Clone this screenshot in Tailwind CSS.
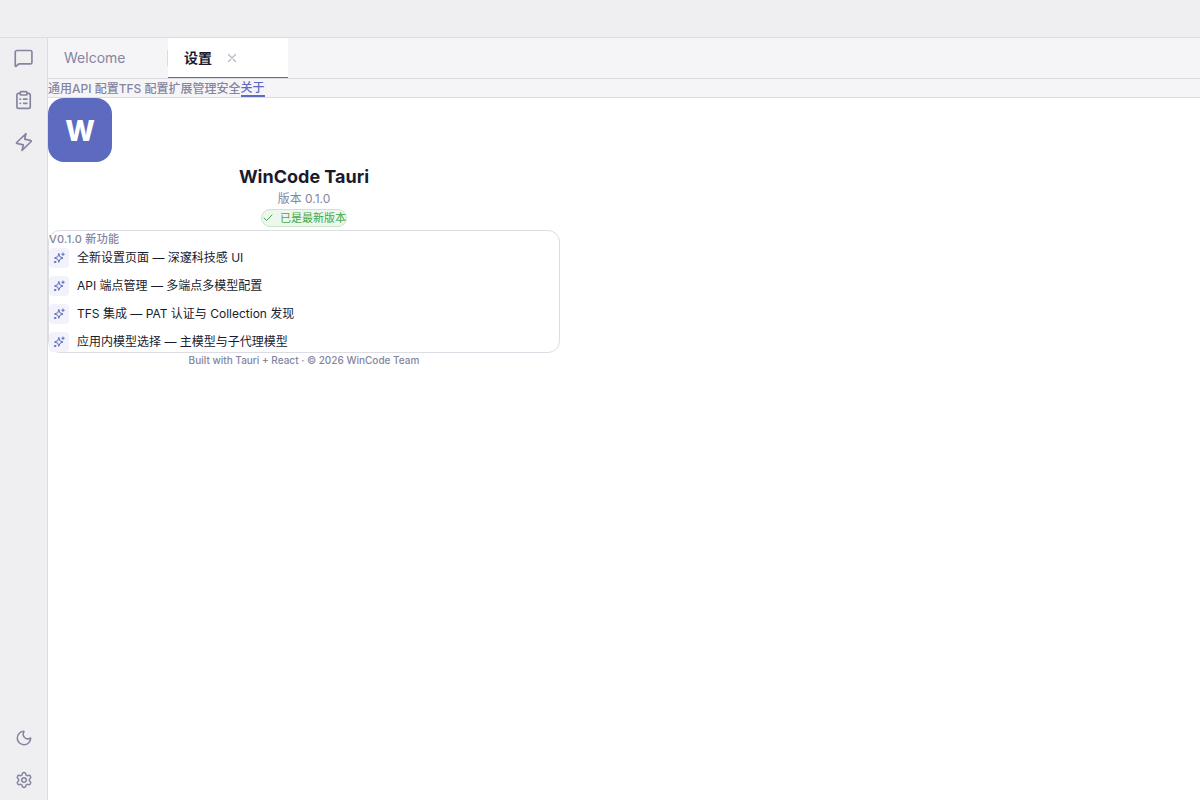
<!DOCTYPE html>
<html lang="zh-CN">
<head>
  <meta charset="UTF-8">
  <meta name="viewport" content="width=device-width, initial-scale=1.0">
  <title>WinCode Tauri</title>
  <script src="https://cdn.jsdelivr.net/npm/@tailwindcss/browser@4"></script>
</head>
<body class="h-screen flex flex-col overflow-hidden bg-white text-[#1a1a2e] font-['Inter','Noto_Sans_CJK_SC',sans-serif] antialiased">

  <header class="h-[38px] shrink-0 bg-[#efeff2] border-b border-[#dcdce4]"></header>

  <div class="flex flex-1 min-h-0">
    <!-- Activity bar -->
    <aside class="w-12 shrink-0 flex flex-col items-center justify-between bg-[#efeff2] border-r border-[#dcdce4] text-[#8585a0]">
      <div class="flex flex-col gap-0.5">
        <button class="size-10 flex items-center justify-center" aria-label="聊天">
          <svg class="size-5" viewBox="0 0 24 24" fill="none" stroke="currentColor" stroke-width="2" stroke-linecap="round" stroke-linejoin="round"><path d="M21.5 17a2 2 0 0 1-2 2H6.4a2 2 0 0 0-1.4.586l-2.2 2.202A.71.71 0 0 1 1.5 21.286V5a2 2 0 0 1 2-2h16a2 2 0 0 1 2 2z"/></svg>
        </button>
        <button class="size-10 flex items-center justify-center" aria-label="任务">
          <svg class="size-5" viewBox="0 0 24 24" fill="none" stroke="currentColor" stroke-width="2" stroke-linecap="round" stroke-linejoin="round"><rect x="7.5" y="2" width="8" height="4" rx="1"/><path d="M15.5 4h2a2 2 0 0 1 2 2v14a2 2 0 0 1-2 2h-12a2 2 0 0 1-2-2V6a2 2 0 0 1 2-2h2M11.5 11h4M11.5 16h4M7.3 11h.4M7.3 16h.4"/></svg>
        </button>
        <button class="size-10 flex items-center justify-center" aria-label="技能">
          <svg class="size-5" viewBox="0 0 24 24" fill="none" stroke="currentColor" stroke-width="2" stroke-linecap="round" stroke-linejoin="round"><path d="M14.4 2 12.8 8.6l7.6 1.8q.8.3.2 1L9.6 22l1.600-6.600L3.400 13.600q-.8-.3-.2-1z"/></svg>
        </button>
      </div>
      <div class="flex flex-col gap-0.5">
        <button class="size-10 flex items-center justify-center" aria-label="深色模式">
          <svg class="size-[18px]" viewBox="0 0 24 24" fill="none" stroke="currentColor" stroke-width="2" stroke-linecap="round" stroke-linejoin="round"><path d="M20.985 12.486a9 9 0 1 1-9.473-9.472c.405-.022.617.46.402.803a6 6 0 0 0 8.268 8.268c.344-.215.825-.004.803.401"/></svg>
        </button>
        <button class="size-10 flex items-center justify-center" aria-label="设置">
          <svg class="size-[18px]" viewBox="0 0 24 24" fill="none" stroke="currentColor" stroke-width="2" stroke-linecap="round" stroke-linejoin="round"><path d="M9.671 4.136a2.34 2.34 0 0 1 4.659 0 2.34 2.34 0 0 0 3.319 1.915 2.34 2.34 0 0 1 2.33 4.033 2.34 2.34 0 0 0 0 3.831 2.34 2.34 0 0 1-2.33 4.033 2.34 2.34 0 0 0-3.319 1.915 2.34 2.34 0 0 1-4.659 0 2.34 2.34 0 0 0-3.32-1.915 2.34 2.34 0 0 1-2.33-4.033 2.34 2.34 0 0 0 0-3.831A2.34 2.34 0 0 1 6.35 6.051a2.34 2.34 0 0 0 3.319-1.915"/><circle cx="12" cy="12" r="3"/></svg>
        </button>
      </div>
    </aside>

    <div class="flex-1 min-w-0 flex flex-col">
      <!-- Open tabs -->
      <div class="flex h-[41px] shrink-0 bg-[#f5f5f8] border-b border-[#dcdce4] text-sm">
        <div class="w-[120px] flex items-center pl-4 text-[#8585a0]">
          <button class="flex-1 text-left">Welcome</button>
          <span class="w-px h-4 bg-[#dcdce4]"></span>
        </div>
        <div class="w-[120px] h-10 flex items-center gap-3 px-4 bg-white border-b border-[#5c6bc0] font-semibold">
          <button>设置</button>
          <button class="size-4 flex items-center justify-center text-[#b4b4c4]" aria-label="关闭">
            <svg class="size-3.5" viewBox="0 0 24 24" fill="none" stroke="currentColor" stroke-width="2" stroke-linecap="round" stroke-linejoin="round"><path d="M18 6 6 18M6 6l12 12"/></svg>
          </button>
        </div>
      </div>

      <!-- Settings sections -->
      <nav class="flex h-[19px] shrink-0 bg-[#f5f5f8] border-b border-[#dcdce4] text-xs leading-5 font-medium text-[#8585a0]">
        <button>通用</button>
        <button>API 配置</button>
        <button>TFS 配置</button>
        <button>扩展管理</button>
        <button>安全</button>
        <button class="h-[18px] leading-[18px] border-b-2 border-[#5c6bc0] text-[#5c6bc0]">关于</button>
      </nav>

      <main class="flex-1 min-h-0 overflow-auto">
        <div class="max-w-lg">
          <div class="size-16 pt-0.5 flex items-center justify-center rounded-2xl bg-[#5c6bc0] text-white text-[28px] font-extrabold">W</div>
          <div class="flex flex-col items-center">
            <h1 class="text-lg leading-[30px] font-bold">WinCode Tauri</h1>
            <p class="mb-1 text-xs leading-[13px] text-[#8585a0]">版本 0.1.0</p>
            <div class="h-[18px] flex items-center gap-1.5 rounded-full border border-[#c8e6c9] bg-[#edf7ed] text-[11px] leading-4 text-[#43a847]">
              <svg class="size-3" viewBox="0 0 24 24" fill="none" stroke="currentColor" stroke-width="2" stroke-linecap="round" stroke-linejoin="round"><path d="M20 6 9 17l-5-5"/></svg>
              已是最新版本
            </div>
          </div>

          <section class="mt-[3px] rounded-xl border border-[#dcdce4]">
            <h2 class="text-[11px] leading-[17px] font-medium tracking-wide text-[#8585a0]">V0.1.0 新功能</h2>
            <ul class="flex flex-col gap-2 text-xs leading-5">
              <li class="flex items-center gap-2">
                <span class="size-5 flex items-center justify-center rounded bg-[#f1f2fa] text-[#5c6bc0]">
                  <svg class="size-3" viewBox="0 0 24 24" fill="none" stroke="currentColor" stroke-width="2" stroke-linecap="round" stroke-linejoin="round"><path d="M11.5 3.5 9.5 9.500 3 12l6.500 2.500 2 6 2.500-6 6-2.500-6-2.500zM20 2v5M22.500 4.500h-5"/><circle cx="4" cy="20" r="1.500"/></svg>
                </span>
                全新设置页面 — 深邃科技感 UI
              </li>
              <li class="flex items-center gap-2">
                <span class="size-5 flex items-center justify-center rounded bg-[#f1f2fa] text-[#5c6bc0]">
                  <svg class="size-3" viewBox="0 0 24 24" fill="none" stroke="currentColor" stroke-width="2" stroke-linecap="round" stroke-linejoin="round"><path d="M11.5 3.5 9.5 9.500 3 12l6.500 2.500 2 6 2.500-6 6-2.500-6-2.500zM20 2v5M22.500 4.500h-5"/><circle cx="4" cy="20" r="1.500"/></svg>
                </span>
                API 端点管理 — 多端点多模型配置
              </li>
              <li class="flex items-center gap-2">
                <span class="size-5 flex items-center justify-center rounded bg-[#f1f2fa] text-[#5c6bc0]">
                  <svg class="size-3" viewBox="0 0 24 24" fill="none" stroke="currentColor" stroke-width="2" stroke-linecap="round" stroke-linejoin="round"><path d="M11.5 3.5 9.5 9.500 3 12l6.500 2.500 2 6 2.500-6 6-2.500-6-2.500zM20 2v5M22.500 4.500h-5"/><circle cx="4" cy="20" r="1.500"/></svg>
                </span>
                TFS 集成 — PAT 认证与 Collection 发现
              </li>
              <li class="flex items-center gap-2">
                <span class="size-5 flex items-center justify-center rounded bg-[#f1f2fa] text-[#5c6bc0]">
                  <svg class="size-3" viewBox="0 0 24 24" fill="none" stroke="currentColor" stroke-width="2" stroke-linecap="round" stroke-linejoin="round"><path d="M11.5 3.5 9.5 9.500 3 12l6.500 2.500 2 6 2.500-6 6-2.500-6-2.500zM20 2v5M22.500 4.500h-5"/><circle cx="4" cy="20" r="1.500"/></svg>
                </span>
                应用内模型选择 — 主模型与子代理模型
              </li>
            </ul>
          </section>

          <p class="text-center text-[10px] leading-[15px] font-medium text-[#8585a0]">Built with Tauri + React · © 2026 WinCode Team</p>
        </div>
      </main>
    </div>
  </div>

</body>
</html>
